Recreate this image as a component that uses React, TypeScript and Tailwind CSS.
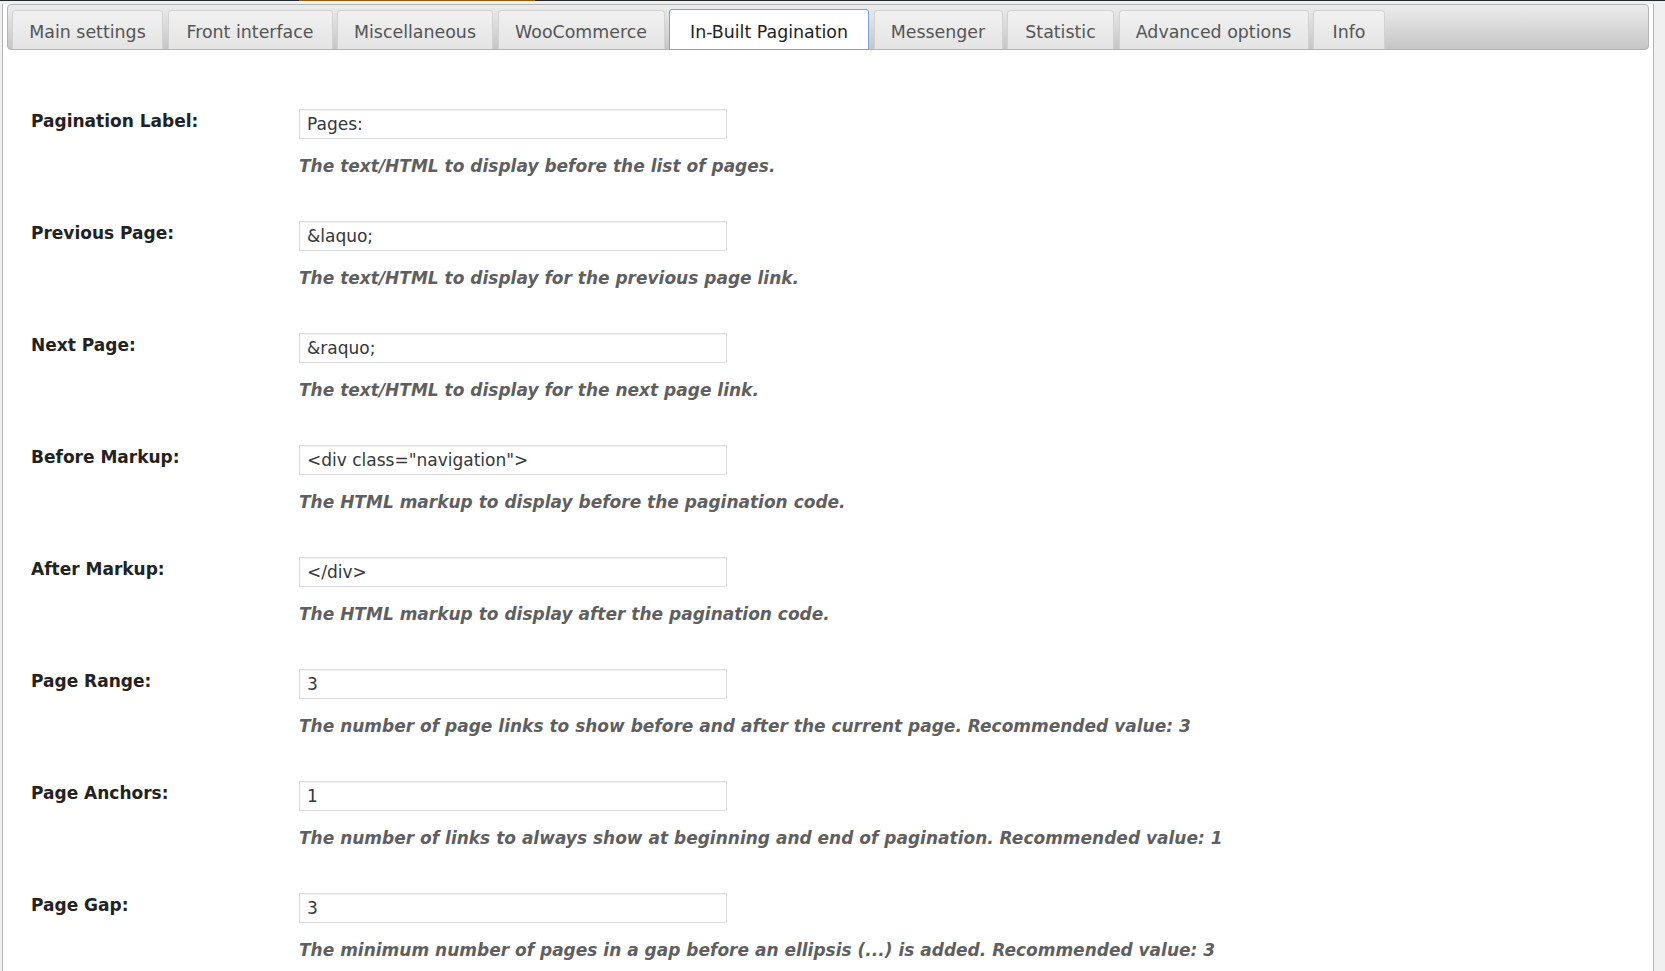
import React from 'react'

type Field = {
  label: string
  value: string
  help: string
}

type Tab = { name: string; w: string }

const tabs: Tab[] = [
  { name: 'Main settings', w: 'w-[151px]' },
  { name: 'Front interface', w: 'w-[165px]' },
  { name: 'Miscellaneous', w: 'w-[156px]' },
  { name: 'WooCommerce', w: 'w-[167px]' },
  { name: 'In-Built Pagination', w: 'w-[200px]' },
  { name: 'Messenger', w: 'w-[129px]' },
  { name: 'Statistic', w: 'w-[107px]' },
  { name: 'Advanced options', w: 'w-[190px]' },
  { name: 'Info', w: 'w-[72px]' },
]

const fields: Field[] = [
  { label: 'Pagination Label:', value: 'Pages:', help: 'The text/HTML to display before the list of pages.' },
  { label: 'Previous Page:', value: '&laquo;', help: 'The text/HTML to display for the previous page link.' },
  { label: 'Next Page:', value: '&raquo;', help: 'The text/HTML to display for the next page link.' },
  { label: 'Before Markup:', value: '<div class="navigation">', help: 'The HTML markup to display before the pagination code.' },
  { label: 'After Markup:', value: '</div>', help: 'The HTML markup to display after the pagination code.' },
  { label: 'Page Range:', value: '3', help: 'The number of page links to show before and after the current page. Recommended value: 3' },
  { label: 'Page Anchors:', value: '1', help: 'The number of links to always show at beginning and end of pagination. Recommended value: 1' },
  { label: 'Page Gap:', value: '3', help: 'The minimum number of pages in a gap before an ellipsis (...) is added. Recommended value: 3' },
]

const ACTIVE = 'In-Built Pagination'

export default function App() {
  return (
    <div className="h-[971px] w-[1665px] overflow-hidden bg-[#f0f0f0] font-['DejaVu_Sans',Verdana,sans-serif]">
      {/* admin bar edge */}
      <div className="flex h-px">
        <div className="w-[299px] bg-[#23282d]" />
        <div className="w-[236px] bg-[#9a5a0c]" />
        <div className="flex-1 bg-[#23282d]" />
      </div>

      <div className="ml-[2px] h-[970px] w-[1652px] border-x border-[#b4b4b4] bg-white">
        {/* tab bar */}
        <div className="ml-[4px] mr-[4px] mt-[3px] flex h-[46px] items-end gap-[4.5px] rounded-[4px] border border-[#b3b3b3] bg-gradient-to-b from-[#ececec] to-[#c6c6c6] pl-[4px]">
          {tabs.map((t) => {
            const active = t.name === ACTIVE
            return (
              <div
                key={t.name}
                className={
                  active
                    ? `relative top-px flex h-[41px] ${t.w} items-center justify-center rounded-t-[3px] border border-[#6ea6dd] bg-white pt-[6px] text-[17.4px] text-[#222]`
                    : `flex h-[39px] ${t.w} items-center justify-center rounded-t-[4px] border border-b-0 border-[#d2d2d2] bg-gradient-to-b from-[#f1f1f1] to-[#e4e4e4] pt-[4px] text-[17.4px] text-[#555]`
                }
              >
                {t.name}
              </div>
            )
          })}
        </div>

        {/* settings rows */}
        <div className="flex flex-col gap-[45px] pl-[28px] pt-[59px]">
          {fields.map((f) => (
            <div key={f.label} className="grid grid-cols-[268px_1fr]">
              <div className="text-[17px] font-bold leading-[24px] text-[#222]">{f.label}</div>
              <div>
                <input
                  readOnly
                  value={f.value}
                  className="block h-[30px] w-[428px] border border-[#dcdcdc] bg-white px-[7px] text-[17px] text-[#32373c] shadow-[inset_0_1px_2px_rgba(0,0,0,0.07)] outline-none"
                />
                <p className="mt-[17px] text-[17px] font-bold italic leading-[20px] text-[#5f5f5f]">{f.help}</p>
              </div>
            </div>
          ))}
        </div>
      </div>
    </div>
  )
}
